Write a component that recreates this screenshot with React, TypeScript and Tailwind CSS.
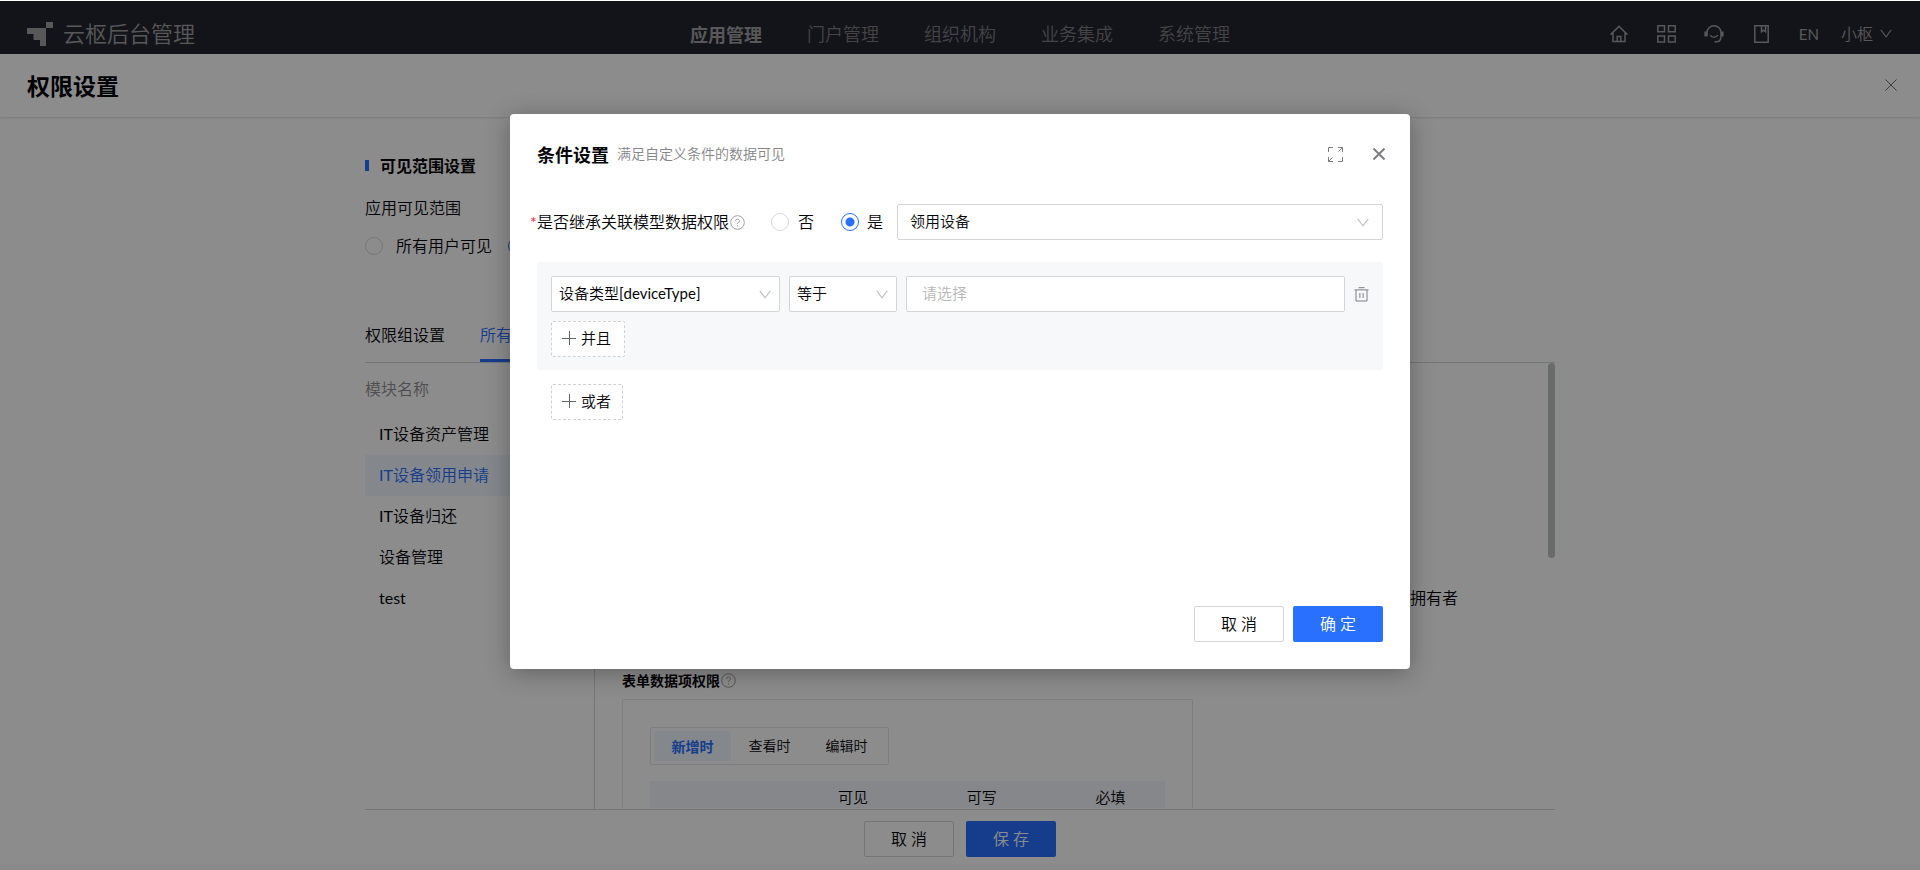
import React, { useState } from "react";

const FONT = "font-['Lato','Noto_Sans_CJK_SC_DemiLight','Noto_Sans_CJK_SC',sans-serif] font-normal";
const BOLD = "font-['Noto_Sans_CJK_SC',sans-serif] font-bold";

function Help({ className }: { className?: string }) {
  return (
    <svg viewBox="0 0 15 15" className={`size-[15px] text-[#a0a0a6] ${className ?? ""}`} fill="none" stroke="currentColor">
      <circle cx="7.5" cy="7.5" r="6.8" />
      <path d="M5.6 6a1.9 1.9 0 1 1 2.7 1.7c-.6.3-.8.6-.8 1.3" />
      <path d="M7.5 10.3v1.1" />
    </svg>
  );
}

function Chevron({ className }: { className?: string }) {
  return (
    <svg viewBox="0 0 12 9" className={className} fill="none" stroke="currentColor" strokeWidth="1.1">
      <path d="M.8.8 6 7.8 11.2.8" />
    </svg>
  );
}

function Close({ className }: { className?: string }) {
  return (
    <svg viewBox="0 0 12 12" className={className} fill="none" stroke="currentColor">
      <path d="M.5.5l11 11M11.5.5l-11 11" />
    </svg>
  );
}

function Plus() {
  return (
    <svg viewBox="0 0 14 14" className="size-3.5 text-[#63656e]" stroke="currentColor" shapeRendering="crispEdges">
      <path d="M7.5 0v14M0 7.5h14" />
    </svg>
  );
}

function Radio({ name, label, checked, onChange, gap }: { name: string; label: string; checked: boolean; onChange: () => void; gap: string }) {
  return (
    <label className={`flex items-center ${gap}`}>
      <input
        type="radio"
        name={name}
        checked={checked}
        onChange={onChange}
        className="size-[18px] shrink-0 appearance-none rounded-full border border-[#d9d9d9] bg-white checked:border-[#2970ff] checked:bg-[radial-gradient(circle,#2970ff_4px,#fff_5px)]"
      />
      <span className="whitespace-nowrap">{label}</span>
    </label>
  );
}

function Select({ label, value, className, pad, arrow }: { label: string; value: string; className: string; pad: string; arrow: string }) {
  return (
    <span className={`relative block ${className}`}>
      <select
        aria-label={label}
        className={`h-9 w-full appearance-none rounded-xs border border-[#d4d5d6] bg-white pb-0.5 text-[15px] leading-5 ${pad}`}
      >
        <option>{value}</option>
      </select>
      <Chevron className={`pointer-events-none absolute top-3.5 h-[9px] w-3 text-[#bfbfbf] ${arrow}`} />
    </span>
  );
}

const navItems = ["应用管理", "门户管理", "组织机构", "业务集成", "系统管理"];
const modules = ["IT设备资产管理", "IT设备领用申请", "IT设备归还", "设备管理", "test"];
const stages = ["新增时", "查看时", "编辑时"];

function TopBar() {
  return (
    <header className="grid h-[54px] grid-cols-[1fr_auto_1fr] items-center border-t border-white bg-[#24262e] px-[27px] pt-3 text-[#a0a0a3]">
      <div className="flex items-center gap-2.5 text-[22px]">
        <svg viewBox="0 0 26 24" className="h-6 w-[26px]" fill="currentColor">
          <path d="M19 0h7v6h-7v18h-6v-6H6.500v-6H0V6h19z" />
        </svg>
        <span className="leading-8">云枢后台管理</span>
      </div>
      <nav className="flex gap-[45px] text-lg leading-7">
        {navItems.map((item, i) => (
          <a key={item} href="#" className={i === 0 ? BOLD : "text-[#7c7c80]"}>
            {item}
          </a>
        ))}
      </nav>
      <div className="flex items-center justify-end">
        <button aria-label="首页" className="mr-[29px]">
          <svg viewBox="0 0 18 18" className="size-[18px]" fill="none" stroke="currentColor" strokeWidth="1.5">
            <path d="M.6 9.600 9 1.200l8.400 8.400M3 8v8.500h12V8M7.200 16.500v-5h3.600v5" />
          </svg>
        </button>
        <button aria-label="应用" className="mr-7">
          <svg viewBox="0 0 19 18" className="h-[18px] w-[19px]" fill="none" stroke="currentColor" strokeWidth="1.5">
            <path d="M.8.8h6.700v6H.8zM11.500.8h6.700v6h-6.700zM.8 11h6.700v6H.8zM11.500 11h6.700v6h-6.700z" />
          </svg>
        </button>
        <button aria-label="客服" className="mr-[30px]">
          <svg viewBox="0 0 20 18" className="h-[18px] w-5" fill="none" stroke="currentColor" strokeWidth="1.500">
            <path d="M3 11V7.500a7 6.700 0 0 1 14 0V11c0 3.500-1.500 5.800-4.500 5.800h-2" />
            <path d="M6.200 10c1.500 3 6.100 3 7.600 0" />
            <path d="M1.800 6.500v5M18.200 6.500v5" strokeWidth="2.800" />
          </svg>
        </button>
        <button aria-label="文档" className="mr-[30px]">
          <svg viewBox="0 0 15 18" className="h-[18px] w-[15px]" fill="none" stroke="currentColor" strokeWidth="1.500">
            <path d="M.8.8h13.400v16.400H.8zM7.500.8v6l2-1.600 2 1.600v-6" />
          </svg>
        </button>
        <button className="mr-[22px] text-[15px] leading-6">EN</button>
        <button className="flex items-center gap-1.5 text-base leading-6">
          小枢
          <Chevron className="h-[9px] w-3.5" />
        </button>
      </div>
    </header>
  );
}

function Page() {
  const [scope, setScope] = useState("part");
  return (
    <div className="flex min-h-screen flex-col bg-white">
      <TopBar />
      <div className="flex h-[63px] items-center justify-between px-[27px] pb-0.5 shadow-[0_1px_2px_rgba(20,30,60,0.15)]">
        <h1 className={`text-[23px] leading-8 ${BOLD}`}>权限设置</h1>
        <button aria-label="关闭" className="mr-[-4px] text-[#6f6f6f]">
          <Close className="size-3" />
        </button>
      </div>
      <main className="mx-auto flex w-full max-w-[1190px] grow flex-col pt-9 text-base leading-6">
        <h2 className={`flex items-center gap-[11px] ${BOLD}`}>
          <span className="h-[11px] w-1 bg-[#2970ff]" />
          可见范围设置
        </h2>
        <p className="mt-[19px]">应用可见范围</p>
        <div className="mt-3.5 flex gap-4">
          <Radio name="scope" label="所有用户可见" gap="gap-[13px]" checked={scope === "all"} onChange={() => setScope("all")} />
          <Radio name="scope" label="部分用户可见" gap="gap-[13px]" checked={scope === "part"} onChange={() => setScope("part")} />
        </div>
        <div className="mt-[63px] flex gap-[35px] border-b border-[#d4d5d6]">
          <button className="h-[41px] pb-[13px]">权限组设置</button>
          <button className="h-[41px] border-b-3 border-[#2970ff] pb-2.5 text-[#2970ff]">所有用户</button>
        </div>
        <div className="flex grow border-b border-[#d4d5d6]">
          <aside className="w-[230px] shrink-0 border-r border-[#d4d5d6] pt-3.5">
            <p className="mb-[13px] text-[#8f8f94]">模块名称</p>
            <ul>
              {modules.map((m, i) => (
                <li key={m}>
                  <a href="#" className={`flex h-[41px] items-center px-3.5 pb-px ${i === 1 ? "bg-[#f0f6ff] text-[#2970ff]" : ""}`}>
                    {m}
                  </a>
                </li>
              ))}
            </ul>
          </aside>
          <section className="flex grow flex-col pl-[27px]">
            <div className="flex justify-end">
              <span className="h-[195px] w-[7px] rounded-full bg-[#c0c2c1]" />
            </div>
            <p className="mt-7 mr-[97px] text-right">数据拥有者</p>
            <h3 className={`mt-[60px] flex items-center gap-px text-sm leading-5 ${BOLD}`}>
              表单数据项权限
              <Help />
            </h3>
            <div className="mt-[9px] h-[109px] w-[571px] overflow-hidden rounded-t-xs border border-b-0 border-[#e6e6ea] px-[27px] pt-[27px]">
              <div className="flex w-[239px] rounded-xs border border-[#e6e6ea] p-[3px] text-sm leading-[30px]">
                {stages.map((s, i) => (
                  <button key={s} className={`w-[77px] rounded-xs text-center ${i === 0 ? `bg-[#f0f6ff] text-[#2970ff] ${BOLD}` : ""}`}>
                    {s}
                  </button>
                ))}
              </div>
              <table className="mt-4 w-full table-fixed text-[15px] leading-8">
                <thead className="bg-[#f4f6fc]">
                  <tr>
                    <td />
                    <th className="pl-5 font-normal">可见</th>
                    <th className="pl-5 font-normal">可写</th>
                    <th className="pl-5 font-normal">必填</th>
                  </tr>
                </thead>
              </table>
            </div>
          </section>
        </div>
      </main>
      <footer className="flex justify-center gap-3 border-b-6 border-[#fafaff] pt-[11px] pb-[7px] text-base leading-6">
        <button className="h-9 w-[90px] rounded-xs border border-[#d4d5d6]">取 消</button>
        <button className="h-9 w-[90px] rounded-xs bg-[#2970ff] text-white">保 存</button>
      </footer>
    </div>
  );
}

function ConditionDialog() {
  const [inherit, setInherit] = useState(true);
  return (
    <div
      role="dialog"
      aria-label="条件设置"
      className="flex min-h-[555px] w-full max-w-[900px] flex-col rounded-sm bg-white px-[27px] pt-[26px] pb-[27px] text-base leading-6 shadow-[0_4px_24px_rgba(0,0,0,0.3)]"
    >
      <div className="flex h-7 items-center">
        <h2 className={`text-lg leading-7 ${BOLD}`}>条件设置</h2>
        <span className="ml-2 text-sm text-[#85858a]">满足自定义条件的数据可见</span>
        <button aria-label="全屏" className="ml-auto text-[#7d7d80]">
          <svg viewBox="0 0 15 15" className="size-[15px]" fill="none" stroke="currentColor">
            <path d="M.5 5V.5H5M10 .5h4.500V5M14.500.5 10.500 4.500M.5 10v4.500H5M.5 14.500l4-4M14.500 10v4.500H10" />
          </svg>
        </button>
        <button aria-label="关闭" className="mr-[-2px] ml-[30px] text-[#7d7d80]">
          <Close className="size-3 stroke-2" />
        </button>
      </div>
      <div className="mt-9 flex items-center">
        <span className="-ml-[7px] w-[7px] text-base text-[#f5222d]">*</span>
        <span className="whitespace-nowrap">是否继承关联模型数据权限</span>
        <Help className="ml-px" />
        <div className="mr-3.5 ml-[26px] flex gap-[27px]">
          <Radio name="inherit" label="否" gap="gap-[9px]" checked={!inherit} onChange={() => setInherit(false)} />
          <Radio name="inherit" label="是" gap="gap-2" checked={inherit} onChange={() => setInherit(true)} />
        </div>
        <Select label="关联模型" value="领用设备" className="grow" pad="px-3" arrow="right-3.5" />
      </div>
      <div className="mt-[22px] rounded-xs bg-[#f7f8fa] px-3.5 pt-3.5 pb-[13px]">
        <div className="flex items-center gap-[9px]">
          <Select label="字段" value="设备类型[deviceType]" className="w-[229px]" pad="px-[7px]" arrow="right-[9px]" />
          <Select label="运算符" value="等于" className="w-[108px]" pad="px-[7px]" arrow="right-[9px]" />
          <input
            aria-label="值"
            placeholder="请选择"
            className="h-9 min-w-0 grow rounded-xs border border-[#d4d5d6] bg-white px-[15px] pb-0.5 text-[15px] placeholder:text-[#b8b8b8]"
          />
          <button aria-label="删除" className="text-[#7d7d80]">
            <svg viewBox="0 0 15 15" className="size-[15px]" fill="none" stroke="currentColor">
              <path d="M4.500 .7h6M.5 2.900h14M2 3v11h11V3M5.900 6v5M9.100 6v5" />
            </svg>
          </button>
        </div>
        <button className="mt-[9px] flex h-9 w-[74px] items-center gap-[5px] rounded-xs border border-dashed border-[#d0d1d3] bg-white pb-0.5 pl-2.5 text-[15px]">
          <Plus />
          并且
        </button>
      </div>
      <button className="mt-3.5 ml-3.5 flex h-9 w-[72px] items-center gap-[5px] rounded-xs border border-dashed border-[#d0d1d3] bg-white pb-0.5 pl-2.5 text-[15px]">
        <Plus />
        或者
      </button>
      <div className="mt-auto flex justify-end gap-[9px]">
        <button className="h-9 w-[90px] rounded-xs border border-[#d4d5d6]">取 消</button>
        <button className="h-9 w-[90px] rounded-xs bg-[#2970ff] text-white">确 定</button>
      </div>
    </div>
  );
}

export default function App() {
  return (
    <div className={`relative ${FONT} text-[#050508]`}>
      <Page />
      <div className="absolute inset-0 top-px flex items-start justify-center bg-black/45 pt-[113px]">
        <ConditionDialog />
      </div>
    </div>
  );
}
